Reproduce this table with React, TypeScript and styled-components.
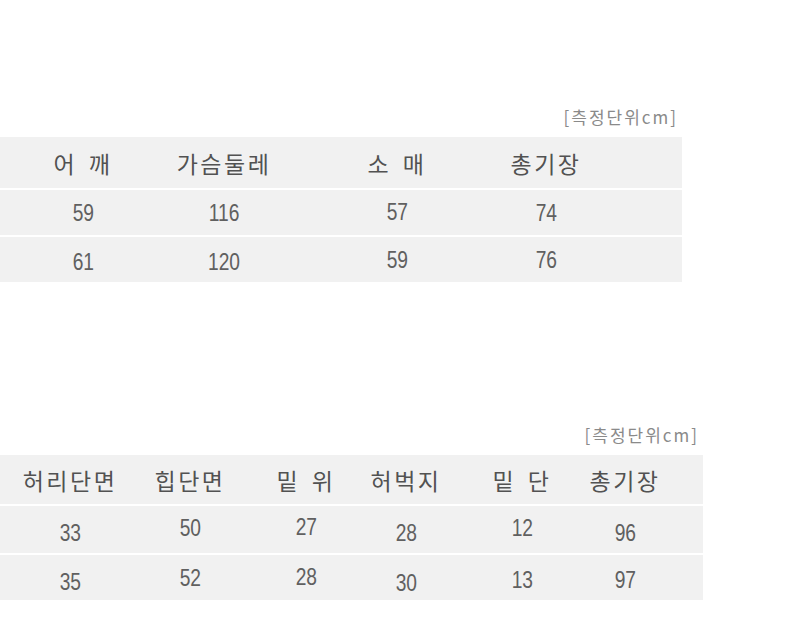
import React from "react";
import styled, { createGlobalStyle } from "styled-components";

const Global = createGlobalStyle`
  html, body { margin: 0; padding: 0; background: #ffffff; }
  body { font-family: "Noto Sans CJK KR", "Noto Sans", sans-serif; }
`;

const Page = styled.div`
  display: flex;
  flex-direction: column;
  padding-top: 107px;
  width: 792px;
  height: 625px;
  box-sizing: border-box;
  overflow: hidden;
`;

const Section = styled.section<{ $width: number; $gapTop: number }>`
  display: flex;
  flex-direction: column;
  width: ${(p) => p.$width}px;
  margin-top: ${(p) => p.$gapTop}px;
`;

const Unit = styled.div`
  align-self: flex-end;
  margin-right: 4px;
  margin-bottom: 10px;
  height: 20px;
  line-height: 20px;
  font-size: 17px;
  letter-spacing: 2px;
  color: #8a8a8a;
`;

const Table = styled.div`
  display: flex;
  flex-direction: column;
  gap: 2px;
`;

const Row = styled.div<{ $cols: string; $height: number }>`
  display: grid;
  grid-template-columns: ${(p) => p.$cols};
  height: ${(p) => p.$height}px;
  background: #f1f1f1;
`;

const Cell = styled.div<{ $dy?: number }>`
  display: flex;
  align-items: center;
  justify-content: center;
  white-space: nowrap;
  color: #5e5e5e;
  transform: translateY(${(p) => p.$dy ?? 0}px);
`;

const Head = styled.span`
  font-size: 23px;
  letter-spacing: 2.5px;
  word-spacing: 4px;
  font-weight: 400;
  color: #525252;
`;

const Num = styled.span`
  display: inline-block;
  font-family: "Liberation Sans", Arial, sans-serif;
  font-size: 24px;
  transform: scaleX(0.8);
  color: #606060;
`;

type TableSpec = {
  width: number;
  gapTop: number;
  cols: string;
  heights: number[];
  headers: string[];
  rows: { v: string; dy?: number }[][];
};

const tables: TableSpec[] = [
  {
    width: 682,
    gapTop: 0,
    cols: "166px 116px 230px 68px 1fr",
    heights: [51, 45, 45],
    headers: ["어 깨", "가슴둘레", "소 매", "총기장"],
    rows: [
      [{ v: "59" }, { v: "116" }, { v: "57", dy: -1 }, { v: "74" }],
      [{ v: "61", dy: 2 }, { v: "120", dy: 2 }, { v: "59" }, { v: "76" }],
    ],
  },
  {
    width: 703,
    gapTop: 143,
    cols: "140px 100px 132px 68px 164px 42px 1fr",
    heights: [49, 47, 45],
    headers: ["허리단면", "힙단면", "밑 위", "허벅지", "밑 단", "총기장"],
    rows: [
      [
        { v: "33", dy: 3 },
        { v: "50", dy: -2 },
        { v: "27", dy: -3 },
        { v: "28", dy: 3 },
        { v: "12", dy: -2 },
        { v: "96", dy: 3 },
      ],
      [
        { v: "35", dy: 4 },
        { v: "52", dy: 0 },
        { v: "28", dy: -1 },
        { v: "30", dy: 5 },
        { v: "13", dy: 2 },
        { v: "97", dy: 2 },
      ],
    ],
  },
];

export default function App() {
  return (
    <>
      <Global />
      <Page>
        {tables.map((t, ti) => (
          <Section key={ti} $width={t.width} $gapTop={t.gapTop}>
            <Unit>[측정단위cm]</Unit>
            <Table>
              <Row $cols={t.cols} $height={t.heights[0]}>
                {t.headers.map((h) => (
                  <Cell key={h}>
                    <Head>{h}</Head>
                  </Cell>
                ))}
              </Row>
              {t.rows.map((r, ri) => (
                <Row key={ri} $cols={t.cols} $height={t.heights[ri + 1]}>
                  {r.map((c, ci) => (
                    <Cell key={ci} $dy={c.dy}>
                      <Num>{c.v}</Num>
                    </Cell>
                  ))}
                </Row>
              ))}
            </Table>
          </Section>
        ))}
      </Page>
    </>
  );
}
